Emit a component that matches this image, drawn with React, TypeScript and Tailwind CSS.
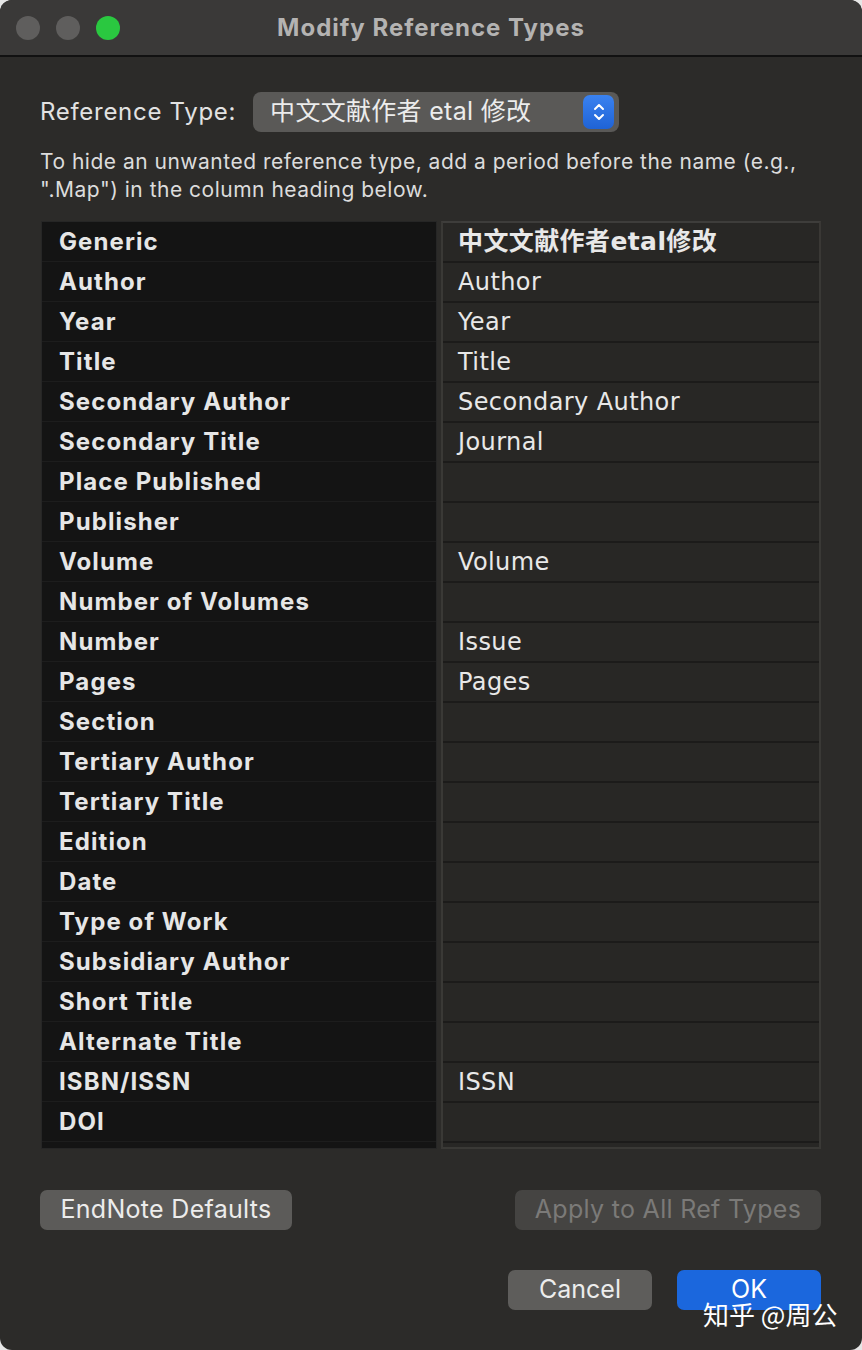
import React from "react";

const rows: [string, string][] = [
  ["Generic", "中文文献作者etal修改"],
  ["Author", "Author"],
  ["Year", "Year"],
  ["Title", "Title"],
  ["Secondary Author", "Secondary Author"],
  ["Secondary Title", "Journal"],
  ["Place Published", ""],
  ["Publisher", ""],
  ["Volume", "Volume"],
  ["Number of Volumes", ""],
  ["Number", "Issue"],
  ["Pages", "Pages"],
  ["Section", ""],
  ["Tertiary Author", ""],
  ["Tertiary Title", ""],
  ["Edition", ""],
  ["Date", ""],
  ["Type of Work", ""],
  ["Subsidiary Author", ""],
  ["Short Title", ""],
  ["Alternate Title", ""],
  ["ISBN/ISSN", "ISSN"],
  ["DOI", ""],
];

const sf = "font-['Inter','Noto_Sans_CJK_SC',sans-serif]";

const App = () => {
  return (
    <div className="w-[862px] h-[1350px] bg-[#e6e6e6]">
      <div className={`w-full h-full rounded-[12px] overflow-hidden bg-[#2c2b29] flex flex-col relative ${sf}`}>
        {/* title bar */}
        <div className="h-[57px] bg-[#3a3938] border-b-2 border-[#111] flex items-center relative shrink-0">
          <div className="flex gap-[16px] pl-[16px]">
            <div className="w-[24px] h-[24px] rounded-full bg-[#5f5e5d]"></div>
            <div className="w-[24px] h-[24px] rounded-full bg-[#5f5e5d]"></div>
            <div className="w-[24px] h-[24px] rounded-full bg-[#2ac840]"></div>
          </div>
          <div className="absolute inset-0 flex items-center justify-center text-[24px] font-bold text-[#b4b3b2] tracking-[1px]">
            Modify Reference Types
          </div>
        </div>

        <div className="px-[40px] flex flex-col">
          {/* reference type */}
          <div className="flex items-center mt-[35px] gap-[17px]">
            <span className="text-[24px] tracking-[0.7px] text-[#e2e2e2]">Reference Type:</span>
            <div className="w-[366px] h-[40px] rounded-[8px] bg-[#5a5957] flex items-center justify-between pl-[17px] pr-[5px]">
              <span className="text-[25px] tracking-[0.3px] text-[#ececec]">中文文献作者 etal 修改</span>
              <div className="w-[31px] h-[34px] rounded-[7px] bg-gradient-to-b from-[#3a82f0] to-[#1f63d6] flex items-center justify-center">
                <svg width="14" height="22" viewBox="0 0 14 22" fill="none" stroke="white" strokeWidth="2" strokeLinecap="round" strokeLinejoin="round">
                  <path d="M3 8 L7 4 L11 8" />
                  <path d="M3 14 L7 18 L11 14" />
                </svg>
              </div>
            </div>
          </div>

          {/* help text */}
          <p className="mt-[16px] text-[21px] tracking-[0.5px] leading-[28px] text-[#dcdcdc] whitespace-nowrap">
            To hide an unwanted reference type, add a period before the name (e.g.,
            <br />
            ".Map") in the column heading below.
          </p>

          {/* table */}
          <div className="mt-[17px] ml-[1px] flex gap-[4px] w-[780px] h-[928px]">
            <div className="w-[396px] bg-[#141414] border border-[#262626] flex flex-col">
              {rows.map(([l], i) => (
                <div key={i} className="h-[40px] border-b border-[#1d1d1d] flex items-center pl-[17px] text-[24px] tracking-[1.1px] font-bold text-[#e6e6e6] shrink-0">
                  {l}
                </div>
              ))}
            </div>
            <div className="w-[380px] bg-[#282725] border-2 border-[#46454299] border-t-[#3e3d3b] flex flex-col">
              {rows.map(([, r], i) => (
                <div
                  key={i}
                  className={`h-[40px] border-b-2 border-[#1c1b1a] flex items-center pl-[15px] text-[24px] tracking-[0.4px] text-[#e8e8e8] shrink-0 font-['DejaVu_Sans','Noto_Sans_CJK_SC',sans-serif] ${i === 0 ? "font-bold text-[25px]" : ""}`}
                >
                  {r}
                </div>
              ))}
            </div>
          </div>

          {/* buttons row 1 */}
          <div className="flex justify-between mt-[41px]">
            <button className="w-[252px] h-[40px] rounded-[7px] bg-[#5c5b59] text-[25px] tracking-[0.3px] text-[#ececec]">
              EndNote Defaults
            </button>
            <button className="w-[306px] h-[40px] rounded-[7px] bg-[#454442] text-[25px] tracking-[0.3px] text-[#7b7a78] mr-[1px]">
              Apply to All Ref Types
            </button>
          </div>

          {/* buttons row 2 */}
          <div className="flex justify-end gap-[25px] mt-[40px]">
            <button className="w-[144px] h-[40px] rounded-[7px] bg-[#5e5d5b] text-[25px] text-[#ececec]">
              Cancel
            </button>
            <button className="w-[144px] h-[40px] rounded-[7px] bg-[#1b67dd] text-[25px] text-white mr-[1px]">
              OK
            </button>
          </div>
        </div>

        {/* watermark */}
        <div className="absolute left-[703px] top-[1294px] text-[26px] text-white font-['Noto_Sans_CJK_SC',sans-serif]">
          知乎 @周公
        </div>
      </div>
    </div>
  );
};

export default App;
